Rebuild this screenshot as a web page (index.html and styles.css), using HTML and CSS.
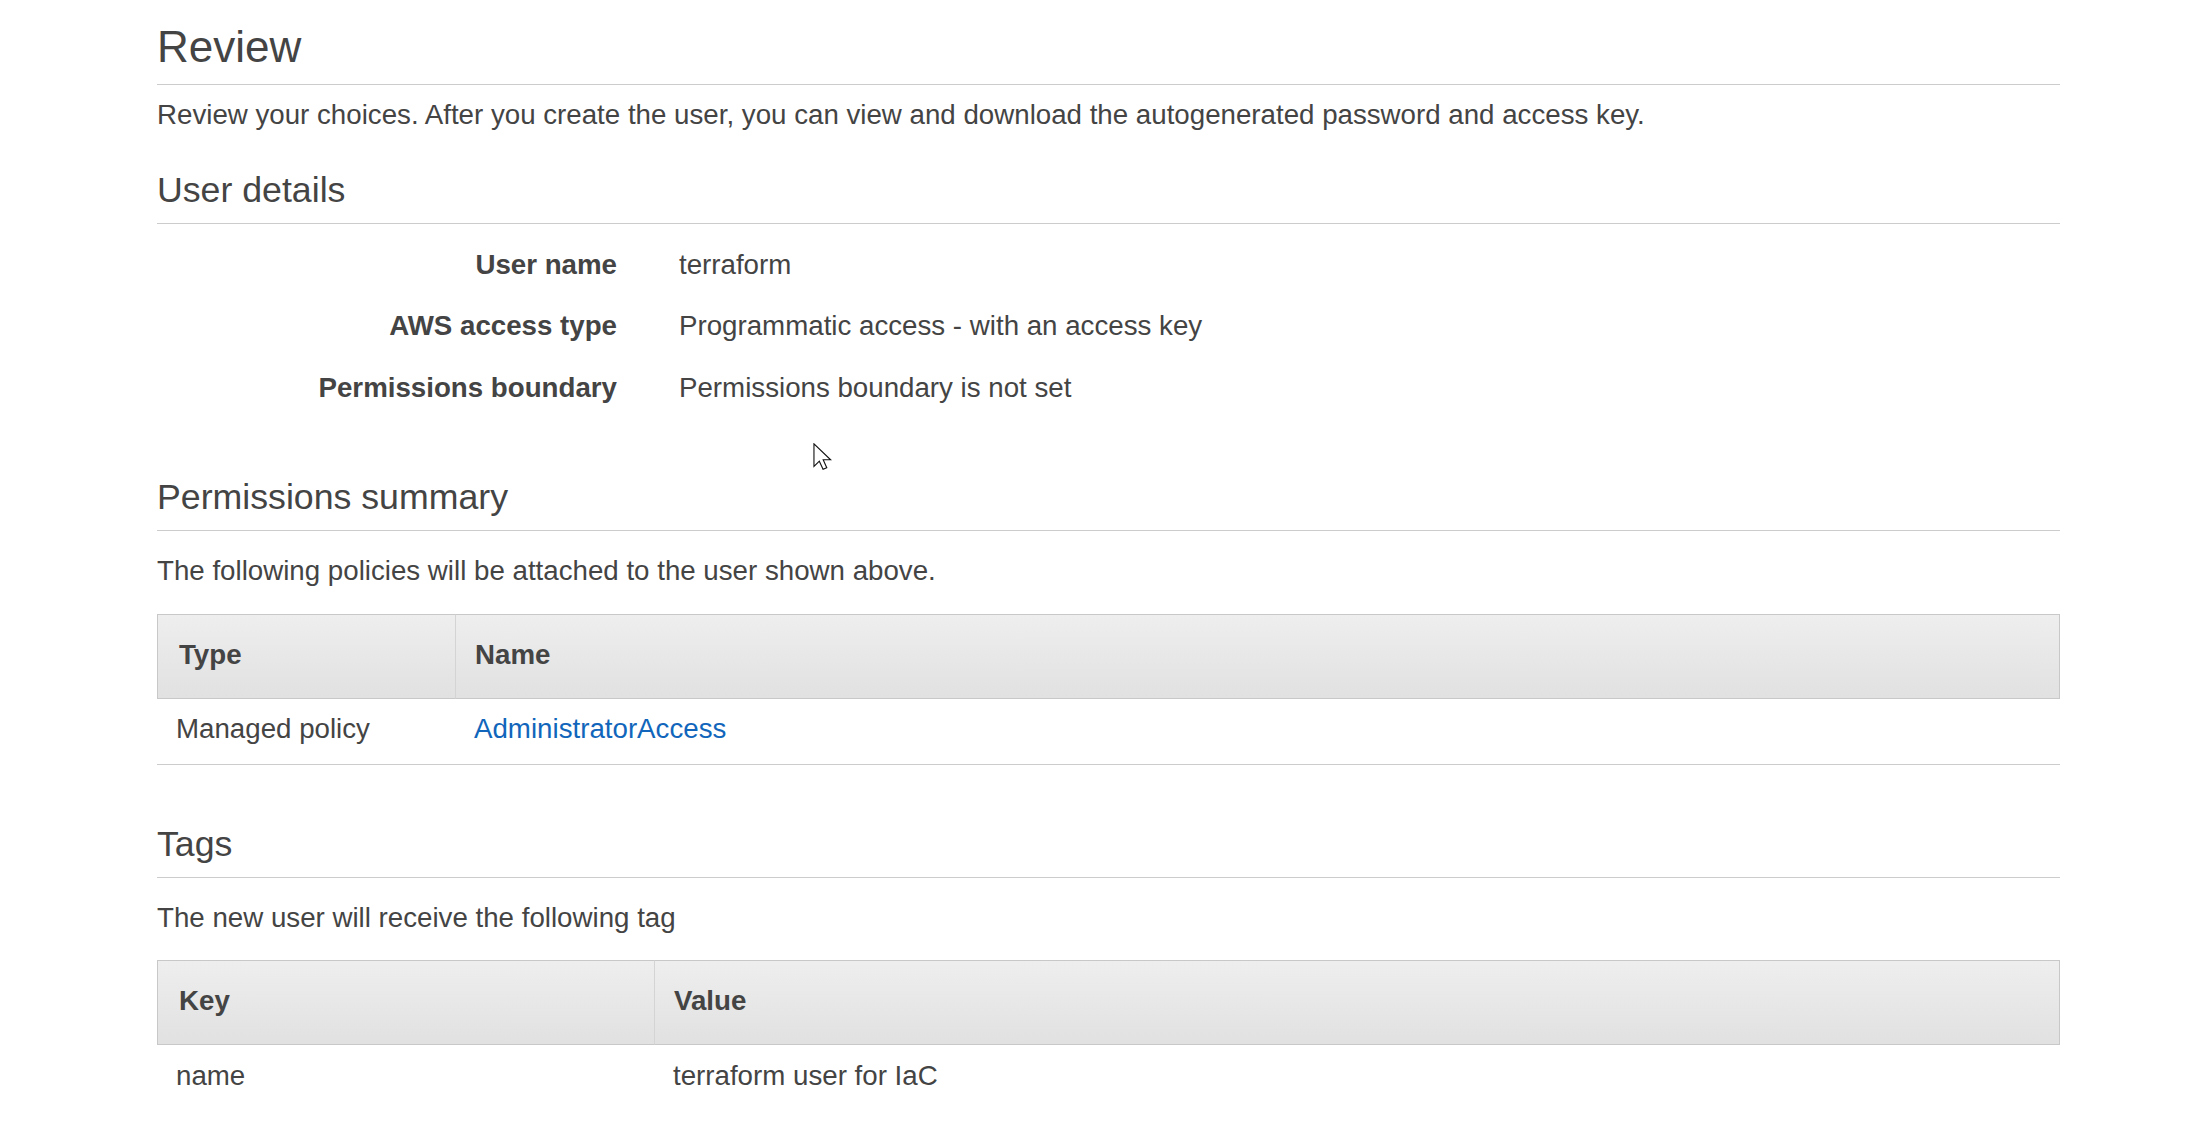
FILE: index.html
```html
<!DOCTYPE html>
<html lang="en">
<head>
<meta charset="utf-8">
<title>Review</title>
<link rel="stylesheet" href="styles.css">
</head>
<body>
<main class="page">
  <h1 class="title">Review</h1>
  <p class="intro">Review your choices. After you create the user, you can view and download the autogenerated password and access key.</p>

  <section class="section section-user">
    <h2 class="section-title">User details</h2>
    <dl class="details">
      <dt class="details-label">User name</dt>
      <dd class="details-value">terraform</dd>
      <dt class="details-label">AWS access type</dt>
      <dd class="details-value">Programmatic access - with an access key</dd>
      <dt class="details-label">Permissions boundary</dt>
      <dd class="details-value">Permissions boundary is not set</dd>
    </dl>
  </section>

  <section class="section section-perms">
    <h2 class="section-title">Permissions summary</h2>
    <p class="section-text">The following policies will be attached to the user shown above.</p>
    <div class="table table-perms" role="table">
      <div class="th" role="columnheader">Type</div>
      <div class="th" role="columnheader">Name</div>
      <div class="td" role="cell">Managed policy</div>
      <div class="td" role="cell"><a class="link" href="#">AdministratorAccess</a></div>
    </div>
  </section>

  <section class="section section-tags">
    <h2 class="section-title">Tags</h2>
    <p class="section-text">The new user will receive the following tag</p>
    <div class="table table-tags" role="table">
      <div class="th" role="columnheader">Key</div>
      <div class="th" role="columnheader">Value</div>
      <div class="td" role="cell">name</div>
      <div class="td" role="cell">terraform user for IaC</div>
    </div>
  </section>

  <svg class="cursor" width="19" height="27" viewBox="0 0 13.6 19.6" aria-hidden="true">
    <path d="M0.6 0.6 L0.6 17 L4.5 13.2 L7.2 19.1 L9.9 17.9 L7.3 12.2 L12.7 12.2 Z" fill="#fff" stroke="#111" stroke-width="0.8" stroke-linejoin="miter"/>
  </svg>
</main>
</body>
</html>
```

FILE: styles.css
```css
* {
  box-sizing: border-box;
}

html, body {
  margin: 0;
  padding: 0;
  background: #ffffff;
}

body {
  font-family: "Liberation Sans", Arial, sans-serif;
  color: #444444;
  font-size: 27.7px;
  line-height: 40px;
}

.page {
  position: relative;
  margin-left: 157px;
  width: 1903px;
  padding-top: 21px;
  height: 1129px;
  overflow: hidden;
}

.title {
  margin: 0;
  font-size: 44px;
  line-height: 52px;
  font-weight: normal;
  padding-bottom: 11px;
  border-bottom: 1px solid #cccccc;
}

.intro {
  margin: 10px 0 0;
}

.section-title {
  margin: 0;
  font-size: 35.7px;
  line-height: 44px;
  font-weight: normal;
  padding-bottom: 11px;
  border-bottom: 1px solid #cccccc;
}

.section-user {
  margin-top: 33px;
}

.section-perms {
  margin-top: 67.5px;
}

.section-tags {
  margin-top: 57px;
}

.details {
  margin: 20.5px 0 0;
  display: grid;
  grid-template-columns: 460px 1fr;
  column-gap: 62px;
  row-gap: 21.5px;
}

.details-label {
  font-weight: bold;
  text-align: right;
}

.details-value {
  margin: 0;
}

.section-text {
  margin: 20px 0 0;
}

.table {
  margin-top: 22.5px;
  display: grid;
}

.table-perms {
  grid-template-columns: 298px 1fr;
}

.table-tags {
  grid-template-columns: 497px 1fr;
}

.th {
  font-weight: bold;
  background: linear-gradient(#eeeeee, #e1e1e1);
  border-top: 1px solid #c8c8c8;
  border-bottom: 1px solid #c8c8c8;
  padding: 20px 19px 23px;
}

.th:nth-child(1) {
  border-left: 1px solid #c8c8c8;
  padding-left: 21px;
}

.th:nth-child(2) {
  border-left: 1px solid #d4d4d4;
  border-right: 1px solid #c8c8c8;
}

.td {
  padding: 10.5px 19px 14.5px;
  border-bottom: 1px solid #cccccc;
}

.table-tags .td {
  border-bottom: none;
}

.link {
  color: #1166bb;
  text-decoration: none;
}

.cursor {
  position: absolute;
  left: 656px;
  top: 443px;
}
```
